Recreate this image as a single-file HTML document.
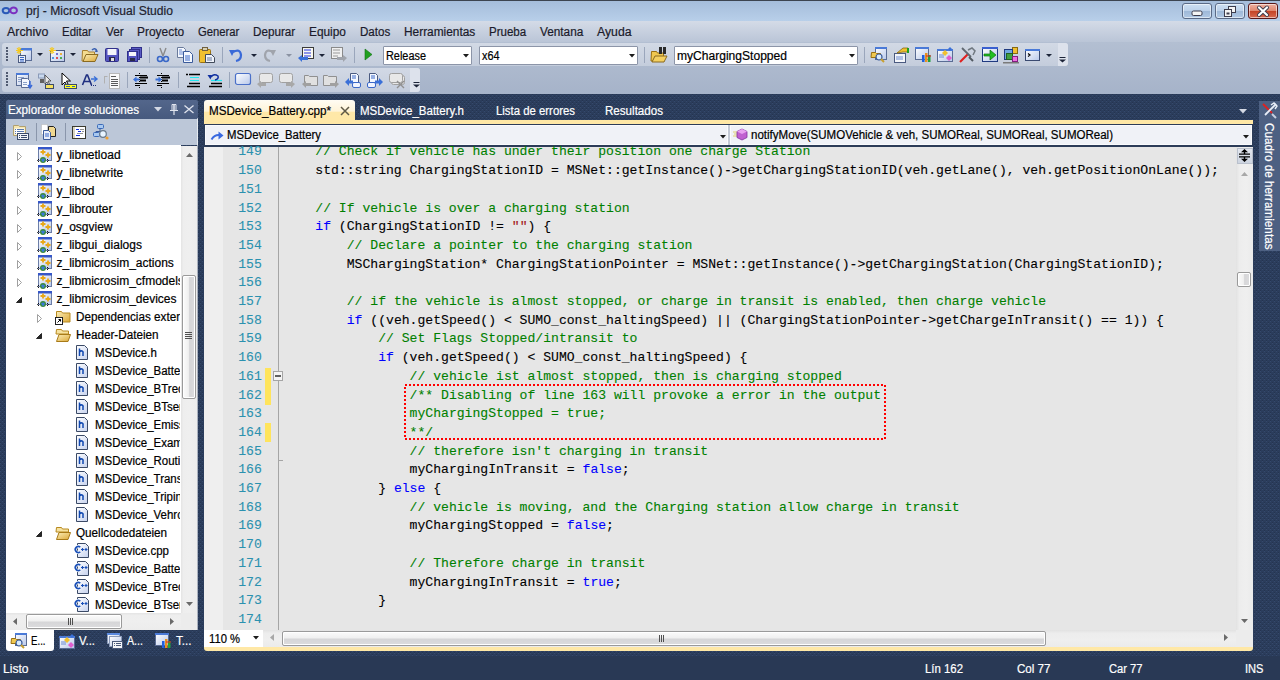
<!DOCTYPE html>
<html><head><meta charset="utf-8"><style>
html,body{margin:0;padding:0;width:1280px;height:680px;overflow:hidden;position:relative}
body{background:#2e4166;font-family:"Liberation Sans",sans-serif}
.t{position:absolute;white-space:pre;-webkit-text-stroke:0.2px currentColor}
.m{-webkit-text-stroke:0.1px currentColor}
svg{position:absolute;overflow:visible}
</style></head><body>
<svg style="left:0;top:93px" width="1280" height="564" shape-rendering="crispEdges"><defs><pattern id="bgp" width="4" height="4" patternUnits="userSpaceOnUse"><rect width="4" height="4" fill="#2b3d5c"/><rect x="2" y="0" width="1" height="1" fill="#36496c"/><rect x="0" y="2" width="1" height="1" fill="#36496c"/><rect x="0" y="1" width="1" height="1" fill="#253450"/><rect x="2" y="3" width="1" height="1" fill="#253450"/></pattern></defs><rect width="1280" height="564" fill="url(#bgp)"/></svg>
<div style="position:absolute;left:0px;top:656px;width:1280px;height:24px;background:#293955"></div>
<div style="position:absolute;left:0px;top:0px;width:1280px;height:21px;background:linear-gradient(#a4bcda,#b8cfe9)"></div>
<div style="position:absolute;left:0px;top:0px;width:1280px;height:1px;background:#3c4450"></div>
<div class="t" style="left:26px;top:4.84px;color:#1e1e2e;font-size:12px;line-height:12px;font-family:'Liberation Sans';font-weight:400;transform:scaleX(1.0079);transform-origin:0 0;">prj - Microsoft Visual Studio</div>
<div style="position:absolute;left:0px;top:21px;width:1280px;height:21px;background:linear-gradient(#d4dbe7,#bac5d7)"></div>
<div class="t" style="left:6.5px;top:25.84px;color:#1b1b2b;font-size:12px;line-height:12px;font-family:'Liberation Sans';font-weight:400;transform:scaleX(1.0321);transform-origin:0 0;">Archivo</div>
<div class="t" style="left:62.0px;top:25.84px;color:#1b1b2b;font-size:12px;line-height:12px;font-family:'Liberation Sans';font-weight:400;transform:scaleX(0.9535);transform-origin:0 0;">Editar</div>
<div class="t" style="left:105.5px;top:25.84px;color:#1b1b2b;font-size:12px;line-height:12px;font-family:'Liberation Sans';font-weight:400;transform:scaleX(0.9825);transform-origin:0 0;">Ver</div>
<div class="t" style="left:137.0px;top:25.84px;color:#1b1b2b;font-size:12px;line-height:12px;font-family:'Liberation Sans';font-weight:400;transform:scaleX(0.9945);transform-origin:0 0;">Proyecto</div>
<div class="t" style="left:198.2px;top:25.84px;color:#1b1b2b;font-size:12px;line-height:12px;font-family:'Liberation Sans';font-weight:400;transform:scaleX(0.9380);transform-origin:0 0;">Generar</div>
<div class="t" style="left:253.1px;top:25.84px;color:#1b1b2b;font-size:12px;line-height:12px;font-family:'Liberation Sans';font-weight:400;transform:scaleX(0.9733);transform-origin:0 0;">Depurar</div>
<div class="t" style="left:309.2px;top:25.84px;color:#1b1b2b;font-size:12px;line-height:12px;font-family:'Liberation Sans';font-weight:400;transform:scaleX(0.9873);transform-origin:0 0;">Equipo</div>
<div class="t" style="left:360.0px;top:25.84px;color:#1b1b2b;font-size:12px;line-height:12px;font-family:'Liberation Sans';font-weight:400;transform:scaleX(0.9662);transform-origin:0 0;">Datos</div>
<div class="t" style="left:404.0px;top:25.84px;color:#1b1b2b;font-size:12px;line-height:12px;font-family:'Liberation Sans';font-weight:400;transform:scaleX(0.9898);transform-origin:0 0;">Herramientas</div>
<div class="t" style="left:488.9px;top:25.84px;color:#1b1b2b;font-size:12px;line-height:12px;font-family:'Liberation Sans';font-weight:400;transform:scaleX(0.9612);transform-origin:0 0;">Prueba</div>
<div class="t" style="left:539.7px;top:25.84px;color:#1b1b2b;font-size:12px;line-height:12px;font-family:'Liberation Sans';font-weight:400;transform:scaleX(0.9830);transform-origin:0 0;">Ventana</div>
<div class="t" style="left:596.7px;top:25.84px;color:#1b1b2b;font-size:12px;line-height:12px;font-family:'Liberation Sans';font-weight:400;transform:scaleX(1.0203);transform-origin:0 0;">Ayuda</div>
<div style="position:absolute;left:0px;top:42px;width:1280px;height:52px;background:linear-gradient(#b3bfd2,#a6b3c9)"></div>
<div style="position:absolute;left:2px;top:43px;width:1066px;height:23px;background:linear-gradient(#d2d9e5,#c4cddc);border-radius:3px"></div>
<div style="position:absolute;left:2px;top:68px;width:418px;height:24px;background:linear-gradient(#d2d9e5,#c4cddc);border-radius:3px"></div>
<div class="t" style="left:3px;top:663.14px;color:#ffffff;font-size:12px;line-height:12px;font-family:'Liberation Sans';font-weight:400;transform:scaleX(1.0055);transform-origin:0 0;">Listo</div>
<div class="t" style="left:924.5px;top:663.14px;color:#ffffff;font-size:12px;line-height:12px;font-family:'Liberation Sans';font-weight:400;transform:scaleX(0.9489);transform-origin:0 0;">Lín 162</div>
<div class="t" style="left:1016.5px;top:663.14px;color:#ffffff;font-size:12px;line-height:12px;font-family:'Liberation Sans';font-weight:400;transform:scaleX(0.9658);transform-origin:0 0;">Col 77</div>
<div class="t" style="left:1108.5px;top:663.14px;color:#ffffff;font-size:12px;line-height:12px;font-family:'Liberation Sans';font-weight:400;transform:scaleX(0.9297);transform-origin:0 0;">Car 77</div>
<div class="t" style="left:1244.5px;top:663.14px;color:#ffffff;font-size:12px;line-height:12px;font-family:'Liberation Sans';font-weight:400;transform:scaleX(0.9243);transform-origin:0 0;">INS</div>
<div style="position:absolute;left:6px;top:118px;width:192px;height:27px;background:#bcc7d8"></div>
<div style="position:absolute;left:6px;top:145px;width:175px;height:468px;background:#ffffff"></div>
<div style="position:absolute;left:6px;top:630px;width:192px;height:21px;background:transparent"></div>
<div style="position:absolute;left:6px;top:630px;width:48px;height:21px;background:#ffffff;border-radius:0 0 3px 3px"></div>
<div class="t" style="left:31px;top:634.84px;color:#000;font-size:12px;line-height:12px;font-family:'Liberation Sans';font-weight:400;transform:scaleX(0.8049);transform-origin:0 0;">E...</div>
<div class="t" style="left:78.5px;top:634.84px;color:#fff;font-size:12px;line-height:12px;font-family:'Liberation Sans';font-weight:400;transform:scaleX(0.9464);transform-origin:0 0;">V...</div>
<div class="t" style="left:126.5px;top:634.84px;color:#fff;font-size:12px;line-height:12px;font-family:'Liberation Sans';font-weight:400;transform:scaleX(0.8881);transform-origin:0 0;">A...</div>
<div class="t" style="left:175.5px;top:634.84px;color:#fff;font-size:12px;line-height:12px;font-family:'Liberation Sans';font-weight:400;transform:scaleX(0.9678);transform-origin:0 0;">T...</div>
<div style="position:absolute;left:204px;top:100px;width:151px;height:24px;background:linear-gradient(#fffcf4,#fff4d8 46%,#ffe8a8 52%,#ffe8a6);border-radius:3px 3px 0 0"></div>
<div class="t" style="left:208.5px;top:104.84px;color:#000;font-size:12px;line-height:12px;font-family:'Liberation Sans';font-weight:400;transform:scaleX(0.9695);transform-origin:0 0;">MSDevice_Battery.cpp*</div>
<div class="t" style="left:360px;top:104.84px;color:#fff;font-size:12px;line-height:12px;font-family:'Liberation Sans';font-weight:400;transform:scaleX(0.9585);transform-origin:0 0;">MSDevice_Battery.h</div>
<div class="t" style="left:495.5px;top:104.84px;color:#fff;font-size:12px;line-height:12px;font-family:'Liberation Sans';font-weight:400;transform:scaleX(0.9475);transform-origin:0 0;">Lista de errores</div>
<div class="t" style="left:604.5px;top:104.84px;color:#fff;font-size:12px;line-height:12px;font-family:'Liberation Sans';font-weight:400;transform:scaleX(0.9659);transform-origin:0 0;">Resultados</div>
<div style="position:absolute;left:204px;top:120px;width:1049px;height:5px;background:#ffe8a6"></div>
<div style="position:absolute;left:204px;top:124px;width:1049px;height:23px;background:#2c3c58"></div>
<div style="position:absolute;left:205.2px;top:125.4px;width:522.8px;height:20px;background:#f0f2f7;box-sizing:border-box;border:1px solid #fafbfd"></div>
<div style="position:absolute;left:730px;top:125.4px;width:521.5px;height:20px;background:#f0f2f7;box-sizing:border-box;border:1px solid #fafbfd"></div>
<div class="t" style="left:227px;top:128.84px;color:#000;font-size:12px;line-height:12px;font-family:'Liberation Sans';font-weight:400;transform:scaleX(0.9459);transform-origin:0 0;">MSDevice_Battery</div>
<div class="t" style="left:751px;top:128.84px;color:#000;font-size:12px;line-height:12px;font-family:'Liberation Sans';font-weight:400;transform:scaleX(0.9608);transform-origin:0 0;">notifyMove(SUMOVehicle &amp; veh, SUMOReal, SUMOReal, SUMOReal)</div>
<div style="position:absolute;left:204px;top:147px;width:1049px;height:483px;background:#e6e6e6"></div>
<div style="position:absolute;left:204px;top:147px;width:19px;height:483px;background:#efefef"></div>
<div style="position:absolute;left:204px;top:630px;width:1049px;height:17px;background:#efefef"></div>
<div style="position:absolute;left:204px;top:630px;width:59px;height:17px;background:#ffffff"></div>
<div class="t" style="left:208.5px;top:632.84px;color:#000;font-size:12px;line-height:12px;font-family:'Liberation Sans';font-weight:400;transform:scaleX(0.9354);transform-origin:0 0;">110 %</div>
<div style="position:absolute;left:204px;top:647px;width:1049px;height:4px;background:#ffe8a6;border-radius:0 0 3px 3px"></div>
<div style="position:absolute;left:1259px;top:101px;width:21px;height:150px;background:#4d6082"></div>
<div class="t m" style="left:238.22px;top:145.46px;color:#2b91af;font-size:13.1px;line-height:13.1px;font-family:'Liberation Mono';font-weight:400;">149</div>
<div class="t m" style="left:315.3px;top:145.46px;color:#008000;font-size:13.1px;line-height:13.1px;font-family:'Liberation Mono';font-weight:400;">// Check if vehicle has under their position one charge Station</div>
<div class="t m" style="left:238.22px;top:164.16px;color:#2b91af;font-size:13.1px;line-height:13.1px;font-family:'Liberation Mono';font-weight:400;">150</div>
<div class="t m" style="left:315.3px;top:164.16px;color:#000000;font-size:13.1px;line-height:13.1px;font-family:'Liberation Mono';font-weight:400;">std::string ChargingStationID = MSNet::getInstance()-&gt;getChargingStationID(veh.getLane(), veh.getPositionOnLane());</div>
<div class="t m" style="left:238.22px;top:182.86px;color:#2b91af;font-size:13.1px;line-height:13.1px;font-family:'Liberation Mono';font-weight:400;">151</div>
<div class="t m" style="left:238.22px;top:201.56px;color:#2b91af;font-size:13.1px;line-height:13.1px;font-family:'Liberation Mono';font-weight:400;">152</div>
<div class="t m" style="left:315.3px;top:201.56px;color:#008000;font-size:13.1px;line-height:13.1px;font-family:'Liberation Mono';font-weight:400;">// If vehicle is over a charging station</div>
<div class="t m" style="left:238.22px;top:220.26px;color:#2b91af;font-size:13.1px;line-height:13.1px;font-family:'Liberation Mono';font-weight:400;">153</div>
<div class="t m" style="left:315.3px;top:220.26px;color:#0000ff;font-size:13.1px;line-height:13.1px;font-family:'Liberation Mono';font-weight:400;">if</div>
<div class="t m" style="left:331.02000000000004px;top:220.26px;color:#000000;font-size:13.1px;line-height:13.1px;font-family:'Liberation Mono';font-weight:400;"> (ChargingStationID != </div>
<div class="t m" style="left:511.8px;top:220.26px;color:#a31515;font-size:13.1px;line-height:13.1px;font-family:'Liberation Mono';font-weight:400;">""</div>
<div class="t m" style="left:527.52px;top:220.26px;color:#000000;font-size:13.1px;line-height:13.1px;font-family:'Liberation Mono';font-weight:400;">) {</div>
<div class="t m" style="left:238.22px;top:238.96px;color:#2b91af;font-size:13.1px;line-height:13.1px;font-family:'Liberation Mono';font-weight:400;">154</div>
<div class="t m" style="left:346.74px;top:238.96px;color:#008000;font-size:13.1px;line-height:13.1px;font-family:'Liberation Mono';font-weight:400;">// Declare a pointer to the charging station</div>
<div class="t m" style="left:238.22px;top:257.66px;color:#2b91af;font-size:13.1px;line-height:13.1px;font-family:'Liberation Mono';font-weight:400;">155</div>
<div class="t m" style="left:346.74px;top:257.66px;color:#000000;font-size:13.1px;line-height:13.1px;font-family:'Liberation Mono';font-weight:400;">MSChargingStation* ChargingStationPointer = MSNet::getInstance()-&gt;getChargingStation(ChargingStationID);</div>
<div class="t m" style="left:238.22px;top:276.36px;color:#2b91af;font-size:13.1px;line-height:13.1px;font-family:'Liberation Mono';font-weight:400;">156</div>
<div class="t m" style="left:238.22px;top:295.06px;color:#2b91af;font-size:13.1px;line-height:13.1px;font-family:'Liberation Mono';font-weight:400;">157</div>
<div class="t m" style="left:346.74px;top:295.06px;color:#008000;font-size:13.1px;line-height:13.1px;font-family:'Liberation Mono';font-weight:400;">// if the vehicle is almost stopped, or charge in transit is enabled, then charge vehicle</div>
<div class="t m" style="left:238.22px;top:313.76px;color:#2b91af;font-size:13.1px;line-height:13.1px;font-family:'Liberation Mono';font-weight:400;">158</div>
<div class="t m" style="left:346.74px;top:313.76px;color:#0000ff;font-size:13.1px;line-height:13.1px;font-family:'Liberation Mono';font-weight:400;">if</div>
<div class="t m" style="left:362.46000000000004px;top:313.76px;color:#000000;font-size:13.1px;line-height:13.1px;font-family:'Liberation Mono';font-weight:400;"> ((veh.getSpeed() &lt; SUMO_const_haltingSpeed) || (ChargingStationPointer-&gt;getChargeInTransit() == 1)) {</div>
<div class="t m" style="left:238.22px;top:332.46px;color:#2b91af;font-size:13.1px;line-height:13.1px;font-family:'Liberation Mono';font-weight:400;">159</div>
<div class="t m" style="left:378.18px;top:332.46px;color:#008000;font-size:13.1px;line-height:13.1px;font-family:'Liberation Mono';font-weight:400;">// Set Flags Stopped/intransit to</div>
<div class="t m" style="left:238.22px;top:351.16px;color:#2b91af;font-size:13.1px;line-height:13.1px;font-family:'Liberation Mono';font-weight:400;">160</div>
<div class="t m" style="left:378.18px;top:351.16px;color:#0000ff;font-size:13.1px;line-height:13.1px;font-family:'Liberation Mono';font-weight:400;">if</div>
<div class="t m" style="left:393.90000000000003px;top:351.16px;color:#000000;font-size:13.1px;line-height:13.1px;font-family:'Liberation Mono';font-weight:400;"> (veh.getSpeed() &lt; SUMO_const_haltingSpeed) {</div>
<div class="t m" style="left:238.22px;top:369.86px;color:#2b91af;font-size:13.1px;line-height:13.1px;font-family:'Liberation Mono';font-weight:400;">161</div>
<div class="t m" style="left:409.62px;top:369.86px;color:#008000;font-size:13.1px;line-height:13.1px;font-family:'Liberation Mono';font-weight:400;">// vehicle ist almost stopped, then is charging stopped</div>
<div class="t m" style="left:238.22px;top:388.56px;color:#2b91af;font-size:13.1px;line-height:13.1px;font-family:'Liberation Mono';font-weight:400;">162</div>
<div class="t m" style="left:409.62px;top:388.56px;color:#008000;font-size:13.1px;line-height:13.1px;font-family:'Liberation Mono';font-weight:400;">/** Disabling of line 163 will provoke a error in the output</div>
<div class="t m" style="left:238.22px;top:407.26px;color:#2b91af;font-size:13.1px;line-height:13.1px;font-family:'Liberation Mono';font-weight:400;">163</div>
<div class="t m" style="left:409.62px;top:407.26px;color:#008000;font-size:13.1px;line-height:13.1px;font-family:'Liberation Mono';font-weight:400;">myChargingStopped = true;</div>
<div class="t m" style="left:238.22px;top:425.96px;color:#2b91af;font-size:13.1px;line-height:13.1px;font-family:'Liberation Mono';font-weight:400;">164</div>
<div class="t m" style="left:409.62px;top:425.96px;color:#008000;font-size:13.1px;line-height:13.1px;font-family:'Liberation Mono';font-weight:400;">**/</div>
<div class="t m" style="left:238.22px;top:444.66px;color:#2b91af;font-size:13.1px;line-height:13.1px;font-family:'Liberation Mono';font-weight:400;">165</div>
<div class="t m" style="left:409.62px;top:444.66px;color:#008000;font-size:13.1px;line-height:13.1px;font-family:'Liberation Mono';font-weight:400;">// therefore isn't charging in transit</div>
<div class="t m" style="left:238.22px;top:463.36px;color:#2b91af;font-size:13.1px;line-height:13.1px;font-family:'Liberation Mono';font-weight:400;">166</div>
<div class="t m" style="left:409.62px;top:463.36px;color:#000000;font-size:13.1px;line-height:13.1px;font-family:'Liberation Mono';font-weight:400;">myChargingInTransit = </div>
<div class="t m" style="left:582.54px;top:463.36px;color:#0000ff;font-size:13.1px;line-height:13.1px;font-family:'Liberation Mono';font-weight:400;">false</div>
<div class="t m" style="left:621.84px;top:463.36px;color:#000000;font-size:13.1px;line-height:13.1px;font-family:'Liberation Mono';font-weight:400;">;</div>
<div class="t m" style="left:238.22px;top:482.06px;color:#2b91af;font-size:13.1px;line-height:13.1px;font-family:'Liberation Mono';font-weight:400;">167</div>
<div class="t m" style="left:378.18px;top:482.06px;color:#000000;font-size:13.1px;line-height:13.1px;font-family:'Liberation Mono';font-weight:400;">} </div>
<div class="t m" style="left:393.90000000000003px;top:482.06px;color:#0000ff;font-size:13.1px;line-height:13.1px;font-family:'Liberation Mono';font-weight:400;">else</div>
<div class="t m" style="left:425.34000000000003px;top:482.06px;color:#000000;font-size:13.1px;line-height:13.1px;font-family:'Liberation Mono';font-weight:400;"> {</div>
<div class="t m" style="left:238.22px;top:500.76px;color:#2b91af;font-size:13.1px;line-height:13.1px;font-family:'Liberation Mono';font-weight:400;">168</div>
<div class="t m" style="left:409.62px;top:500.76px;color:#008000;font-size:13.1px;line-height:13.1px;font-family:'Liberation Mono';font-weight:400;">// vehicle is moving, and the Charging station allow charge in transit</div>
<div class="t m" style="left:238.22px;top:519.46px;color:#2b91af;font-size:13.1px;line-height:13.1px;font-family:'Liberation Mono';font-weight:400;">169</div>
<div class="t m" style="left:409.62px;top:519.46px;color:#000000;font-size:13.1px;line-height:13.1px;font-family:'Liberation Mono';font-weight:400;">myChargingStopped = </div>
<div class="t m" style="left:566.82px;top:519.46px;color:#0000ff;font-size:13.1px;line-height:13.1px;font-family:'Liberation Mono';font-weight:400;">false</div>
<div class="t m" style="left:606.12px;top:519.46px;color:#000000;font-size:13.1px;line-height:13.1px;font-family:'Liberation Mono';font-weight:400;">;</div>
<div class="t m" style="left:238.22px;top:538.16px;color:#2b91af;font-size:13.1px;line-height:13.1px;font-family:'Liberation Mono';font-weight:400;">170</div>
<div class="t m" style="left:238.22px;top:556.86px;color:#2b91af;font-size:13.1px;line-height:13.1px;font-family:'Liberation Mono';font-weight:400;">171</div>
<div class="t m" style="left:409.62px;top:556.86px;color:#008000;font-size:13.1px;line-height:13.1px;font-family:'Liberation Mono';font-weight:400;">// Therefore charge in transit</div>
<div class="t m" style="left:238.22px;top:575.56px;color:#2b91af;font-size:13.1px;line-height:13.1px;font-family:'Liberation Mono';font-weight:400;">172</div>
<div class="t m" style="left:409.62px;top:575.56px;color:#000000;font-size:13.1px;line-height:13.1px;font-family:'Liberation Mono';font-weight:400;">myChargingInTransit = </div>
<div class="t m" style="left:582.54px;top:575.56px;color:#0000ff;font-size:13.1px;line-height:13.1px;font-family:'Liberation Mono';font-weight:400;">true</div>
<div class="t m" style="left:613.98px;top:575.56px;color:#000000;font-size:13.1px;line-height:13.1px;font-family:'Liberation Mono';font-weight:400;">;</div>
<div class="t m" style="left:238.22px;top:594.26px;color:#2b91af;font-size:13.1px;line-height:13.1px;font-family:'Liberation Mono';font-weight:400;">173</div>
<div class="t m" style="left:378.18px;top:594.26px;color:#000000;font-size:13.1px;line-height:13.1px;font-family:'Liberation Mono';font-weight:400;">}</div>
<div class="t m" style="left:238.22px;top:612.96px;color:#2b91af;font-size:13.1px;line-height:13.1px;font-family:'Liberation Mono';font-weight:400;">174</div>
<div style="position:absolute;left:6px;top:145px;width:174px;height:468px;overflow:hidden">
<div class="t" style="left:50.5px;top:3.64px;color:#000;font-size:12px;line-height:12px;font-family:'Liberation Sans';font-weight:400;transform:scaleX(1.0);transform-origin:0 0;">y_libnetload</div>
<div class="t" style="left:50.5px;top:21.64px;color:#000;font-size:12px;line-height:12px;font-family:'Liberation Sans';font-weight:400;transform:scaleX(1.0);transform-origin:0 0;">y_libnetwrite</div>
<div class="t" style="left:50.5px;top:39.64px;color:#000;font-size:12px;line-height:12px;font-family:'Liberation Sans';font-weight:400;transform:scaleX(1.0);transform-origin:0 0;">y_libod</div>
<div class="t" style="left:50.5px;top:57.64px;color:#000;font-size:12px;line-height:12px;font-family:'Liberation Sans';font-weight:400;transform:scaleX(1.0);transform-origin:0 0;">y_librouter</div>
<div class="t" style="left:50.5px;top:75.64px;color:#000;font-size:12px;line-height:12px;font-family:'Liberation Sans';font-weight:400;transform:scaleX(1.0);transform-origin:0 0;">y_osgview</div>
<div class="t" style="left:50.5px;top:93.64px;color:#000;font-size:12px;line-height:12px;font-family:'Liberation Sans';font-weight:400;transform:scaleX(1.0);transform-origin:0 0;">z_libgui_dialogs</div>
<div class="t" style="left:50.5px;top:111.64px;color:#000;font-size:12px;line-height:12px;font-family:'Liberation Sans';font-weight:400;transform:scaleX(1.0);transform-origin:0 0;">z_libmicrosim_actions</div>
<div class="t" style="left:50.5px;top:129.64px;color:#000;font-size:12px;line-height:12px;font-family:'Liberation Sans';font-weight:400;transform:scaleX(1.0);transform-origin:0 0;">z_libmicrosim_cfmodels</div>
<div class="t" style="left:50.5px;top:147.64px;color:#000;font-size:12px;line-height:12px;font-family:'Liberation Sans';font-weight:400;transform:scaleX(1.0);transform-origin:0 0;">z_libmicrosim_devices</div>
<div class="t" style="left:70px;top:165.64px;color:#000;font-size:12px;line-height:12px;font-family:'Liberation Sans';font-weight:400;transform:scaleX(0.975);transform-origin:0 0;">Dependencias externas</div>
<div class="t" style="left:70px;top:183.64px;color:#000;font-size:12px;line-height:12px;font-family:'Liberation Sans';font-weight:400;transform:scaleX(0.975);transform-origin:0 0;">Header-Dateien</div>
<div class="t" style="left:89px;top:201.64px;color:#000;font-size:12px;line-height:12px;font-family:'Liberation Sans';font-weight:400;transform:scaleX(0.955);transform-origin:0 0;">MSDevice.h</div>
<div class="t" style="left:89px;top:219.64px;color:#000;font-size:12px;line-height:12px;font-family:'Liberation Sans';font-weight:400;transform:scaleX(0.955);transform-origin:0 0;">MSDevice_Battery.h</div>
<div class="t" style="left:89px;top:237.64px;color:#000;font-size:12px;line-height:12px;font-family:'Liberation Sans';font-weight:400;transform:scaleX(0.955);transform-origin:0 0;">MSDevice_BTreceiver.h</div>
<div class="t" style="left:89px;top:255.64px;color:#000;font-size:12px;line-height:12px;font-family:'Liberation Sans';font-weight:400;transform:scaleX(0.955);transform-origin:0 0;">MSDevice_BTsender.h</div>
<div class="t" style="left:89px;top:273.64px;color:#000;font-size:12px;line-height:12px;font-family:'Liberation Sans';font-weight:400;transform:scaleX(0.955);transform-origin:0 0;">MSDevice_Emissions.h</div>
<div class="t" style="left:89px;top:291.64px;color:#000;font-size:12px;line-height:12px;font-family:'Liberation Sans';font-weight:400;transform:scaleX(0.955);transform-origin:0 0;">MSDevice_Example.h</div>
<div class="t" style="left:89px;top:309.64px;color:#000;font-size:12px;line-height:12px;font-family:'Liberation Sans';font-weight:400;transform:scaleX(0.955);transform-origin:0 0;">MSDevice_Routing.h</div>
<div class="t" style="left:89px;top:327.64px;color:#000;font-size:12px;line-height:12px;font-family:'Liberation Sans';font-weight:400;transform:scaleX(0.955);transform-origin:0 0;">MSDevice_Transportable.h</div>
<div class="t" style="left:89px;top:345.64px;color:#000;font-size:12px;line-height:12px;font-family:'Liberation Sans';font-weight:400;transform:scaleX(0.955);transform-origin:0 0;">MSDevice_Tripinfo.h</div>
<div class="t" style="left:89px;top:363.64px;color:#000;font-size:12px;line-height:12px;font-family:'Liberation Sans';font-weight:400;transform:scaleX(0.955);transform-origin:0 0;">MSDevice_Vehroutes.h</div>
<div class="t" style="left:70px;top:381.64px;color:#000;font-size:12px;line-height:12px;font-family:'Liberation Sans';font-weight:400;transform:scaleX(0.975);transform-origin:0 0;">Quellcodedateien</div>
<div class="t" style="left:89px;top:399.64px;color:#000;font-size:12px;line-height:12px;font-family:'Liberation Sans';font-weight:400;transform:scaleX(0.955);transform-origin:0 0;">MSDevice.cpp</div>
<div class="t" style="left:89px;top:417.64px;color:#000;font-size:12px;line-height:12px;font-family:'Liberation Sans';font-weight:400;transform:scaleX(0.955);transform-origin:0 0;">MSDevice_Battery.cpp</div>
<div class="t" style="left:89px;top:435.64px;color:#000;font-size:12px;line-height:12px;font-family:'Liberation Sans';font-weight:400;transform:scaleX(0.955);transform-origin:0 0;">MSDevice_BTreceiver.cpp</div>
<div class="t" style="left:89px;top:453.64px;color:#000;font-size:12px;line-height:12px;font-family:'Liberation Sans';font-weight:400;transform:scaleX(0.955);transform-origin:0 0;">MSDevice_BTsender.cpp</div>
</div>
<svg width="0" height="0" style="position:absolute"><defs><linearGradient id="gw" x1="0" y1="0" x2="1" y2="1"><stop offset="0" stop-color="#ffffff"/><stop offset="1" stop-color="#b8c8ea"/></linearGradient><linearGradient id="gf" x1="0" y1="0" x2="1" y2="1"><stop offset="0" stop-color="#fbeeb8"/><stop offset="1" stop-color="#dca838"/></linearGradient><linearGradient id="gp" x1="0" y1="0" x2="1" y2="1"><stop offset="0" stop-color="#ffffff"/><stop offset="1" stop-color="#c6d2ee"/></linearGradient></defs></svg>
<svg style="left:16px;top:152px;" width="8" height="10" viewBox="0 0 8 10"><path d="M1.5 0.5l4 4l-4 4z" fill="#fff" stroke="#a0a0a0"/></svg>
<svg style="left:37px;top:147px;" width="16" height="16" viewBox="0 0 16 16"><rect x="1.5" y="0.5" width="13" height="13" fill="url(#gw)" stroke="#6c7ea8"/><rect x="1" y="0" width="14" height="2.5" fill="#3556c8"/><path d="M6 2.5v5M3.5 5h5M11 5.5v5M8.5 8h5" stroke="#e8a818" stroke-width="1.8"/><circle cx="6" cy="13" r="3" fill="#3a8a3a"/><path d="M4 12.5q2-2 4 0q-1 2-2 3" fill="#3a7ad8"/><path d="M2 12l-1.5 1.5l1.5 1.5M10 12l1.5 1.5l-1.5 1.5" stroke="#000" fill="none" stroke-width="0.9"/></svg>
<svg style="left:16px;top:170px;" width="8" height="10" viewBox="0 0 8 10"><path d="M1.5 0.5l4 4l-4 4z" fill="#fff" stroke="#a0a0a0"/></svg>
<svg style="left:37px;top:165px;" width="16" height="16" viewBox="0 0 16 16"><rect x="1.5" y="0.5" width="13" height="13" fill="url(#gw)" stroke="#6c7ea8"/><rect x="1" y="0" width="14" height="2.5" fill="#3556c8"/><path d="M6 2.5v5M3.5 5h5M11 5.5v5M8.5 8h5" stroke="#e8a818" stroke-width="1.8"/><circle cx="6" cy="13" r="3" fill="#3a8a3a"/><path d="M4 12.5q2-2 4 0q-1 2-2 3" fill="#3a7ad8"/><path d="M2 12l-1.5 1.5l1.5 1.5M10 12l1.5 1.5l-1.5 1.5" stroke="#000" fill="none" stroke-width="0.9"/></svg>
<svg style="left:16px;top:188px;" width="8" height="10" viewBox="0 0 8 10"><path d="M1.5 0.5l4 4l-4 4z" fill="#fff" stroke="#a0a0a0"/></svg>
<svg style="left:37px;top:183px;" width="16" height="16" viewBox="0 0 16 16"><rect x="1.5" y="0.5" width="13" height="13" fill="url(#gw)" stroke="#6c7ea8"/><rect x="1" y="0" width="14" height="2.5" fill="#3556c8"/><path d="M6 2.5v5M3.5 5h5M11 5.5v5M8.5 8h5" stroke="#e8a818" stroke-width="1.8"/><circle cx="6" cy="13" r="3" fill="#3a8a3a"/><path d="M4 12.5q2-2 4 0q-1 2-2 3" fill="#3a7ad8"/><path d="M2 12l-1.5 1.5l1.5 1.5M10 12l1.5 1.5l-1.5 1.5" stroke="#000" fill="none" stroke-width="0.9"/></svg>
<svg style="left:16px;top:206px;" width="8" height="10" viewBox="0 0 8 10"><path d="M1.5 0.5l4 4l-4 4z" fill="#fff" stroke="#a0a0a0"/></svg>
<svg style="left:37px;top:201px;" width="16" height="16" viewBox="0 0 16 16"><rect x="1.5" y="0.5" width="13" height="13" fill="url(#gw)" stroke="#6c7ea8"/><rect x="1" y="0" width="14" height="2.5" fill="#3556c8"/><path d="M6 2.5v5M3.5 5h5M11 5.5v5M8.5 8h5" stroke="#e8a818" stroke-width="1.8"/><circle cx="6" cy="13" r="3" fill="#3a8a3a"/><path d="M4 12.5q2-2 4 0q-1 2-2 3" fill="#3a7ad8"/><path d="M2 12l-1.5 1.5l1.5 1.5M10 12l1.5 1.5l-1.5 1.5" stroke="#000" fill="none" stroke-width="0.9"/></svg>
<svg style="left:16px;top:224px;" width="8" height="10" viewBox="0 0 8 10"><path d="M1.5 0.5l4 4l-4 4z" fill="#fff" stroke="#a0a0a0"/></svg>
<svg style="left:37px;top:219px;" width="16" height="16" viewBox="0 0 16 16"><rect x="1.5" y="0.5" width="13" height="13" fill="url(#gw)" stroke="#6c7ea8"/><rect x="1" y="0" width="14" height="2.5" fill="#3556c8"/><path d="M6 2.5v5M3.5 5h5M11 5.5v5M8.5 8h5" stroke="#e8a818" stroke-width="1.8"/><circle cx="6" cy="13" r="3" fill="#3a8a3a"/><path d="M4 12.5q2-2 4 0q-1 2-2 3" fill="#3a7ad8"/><path d="M2 12l-1.5 1.5l1.5 1.5M10 12l1.5 1.5l-1.5 1.5" stroke="#000" fill="none" stroke-width="0.9"/></svg>
<svg style="left:16px;top:242px;" width="8" height="10" viewBox="0 0 8 10"><path d="M1.5 0.5l4 4l-4 4z" fill="#fff" stroke="#a0a0a0"/></svg>
<svg style="left:37px;top:237px;" width="16" height="16" viewBox="0 0 16 16"><rect x="1.5" y="0.5" width="13" height="13" fill="url(#gw)" stroke="#6c7ea8"/><rect x="1" y="0" width="14" height="2.5" fill="#3556c8"/><path d="M6 2.5v5M3.5 5h5M11 5.5v5M8.5 8h5" stroke="#e8a818" stroke-width="1.8"/><circle cx="6" cy="13" r="3" fill="#3a8a3a"/><path d="M4 12.5q2-2 4 0q-1 2-2 3" fill="#3a7ad8"/><path d="M2 12l-1.5 1.5l1.5 1.5M10 12l1.5 1.5l-1.5 1.5" stroke="#000" fill="none" stroke-width="0.9"/></svg>
<svg style="left:16px;top:260px;" width="8" height="10" viewBox="0 0 8 10"><path d="M1.5 0.5l4 4l-4 4z" fill="#fff" stroke="#a0a0a0"/></svg>
<svg style="left:37px;top:255px;" width="16" height="16" viewBox="0 0 16 16"><rect x="1.5" y="0.5" width="13" height="13" fill="url(#gw)" stroke="#6c7ea8"/><rect x="1" y="0" width="14" height="2.5" fill="#3556c8"/><path d="M6 2.5v5M3.5 5h5M11 5.5v5M8.5 8h5" stroke="#e8a818" stroke-width="1.8"/><circle cx="6" cy="13" r="3" fill="#3a8a3a"/><path d="M4 12.5q2-2 4 0q-1 2-2 3" fill="#3a7ad8"/><path d="M2 12l-1.5 1.5l1.5 1.5M10 12l1.5 1.5l-1.5 1.5" stroke="#000" fill="none" stroke-width="0.9"/></svg>
<svg style="left:16px;top:278px;" width="8" height="10" viewBox="0 0 8 10"><path d="M1.5 0.5l4 4l-4 4z" fill="#fff" stroke="#a0a0a0"/></svg>
<svg style="left:37px;top:273px;" width="16" height="16" viewBox="0 0 16 16"><rect x="1.5" y="0.5" width="13" height="13" fill="url(#gw)" stroke="#6c7ea8"/><rect x="1" y="0" width="14" height="2.5" fill="#3556c8"/><path d="M6 2.5v5M3.5 5h5M11 5.5v5M8.5 8h5" stroke="#e8a818" stroke-width="1.8"/><circle cx="6" cy="13" r="3" fill="#3a8a3a"/><path d="M4 12.5q2-2 4 0q-1 2-2 3" fill="#3a7ad8"/><path d="M2 12l-1.5 1.5l1.5 1.5M10 12l1.5 1.5l-1.5 1.5" stroke="#000" fill="none" stroke-width="0.9"/></svg>
<svg style="left:16px;top:297px;" width="8" height="8" viewBox="0 0 8 8"><path d="M5.5 0.5v5h-5z" fill="#262626" stroke="#262626"/></svg>
<svg style="left:37px;top:291px;" width="16" height="16" viewBox="0 0 16 16"><rect x="1.5" y="0.5" width="13" height="13" fill="url(#gw)" stroke="#6c7ea8"/><rect x="1" y="0" width="14" height="2.5" fill="#3556c8"/><path d="M6 2.5v5M3.5 5h5M11 5.5v5M8.5 8h5" stroke="#e8a818" stroke-width="1.8"/><circle cx="6" cy="13" r="3" fill="#3a8a3a"/><path d="M4 12.5q2-2 4 0q-1 2-2 3" fill="#3a7ad8"/><path d="M2 12l-1.5 1.5l1.5 1.5M10 12l1.5 1.5l-1.5 1.5" stroke="#000" fill="none" stroke-width="0.9"/></svg>
<svg style="left:36px;top:314px;" width="8" height="10" viewBox="0 0 8 10"><path d="M1.5 0.5l4 4l-4 4z" fill="#fff" stroke="#a0a0a0"/></svg>
<svg style="left:55px;top:309px;" width="16" height="16" viewBox="0 0 16 16"><path d="M1.5 2.5h5l1 1.5h7.5v9h-13.5z" fill="url(#gf)" stroke="#b88a20"/><rect x="0.5" y="8.5" width="7" height="7" fill="#fff" stroke="#222"/><path d="M2.5 13.5l3-3M3.5 10.5h2v2" stroke="#000" fill="none"/></svg>
<svg style="left:36px;top:333px;" width="8" height="8" viewBox="0 0 8 8"><path d="M5.5 0.5v5h-5z" fill="#262626" stroke="#262626"/></svg>
<svg style="left:55px;top:328px;" width="16" height="16" viewBox="0 0 16 16"><path d="M1.5 1.5h5l1 1.5h6v3h-12.5z" fill="#f6e2a0" stroke="#b88a20"/><path d="M1.5 13.5l2.5-7h11.5l-2.5 7z" fill="url(#gf)" stroke="#a87a18"/></svg>
<svg style="left:76px;top:345px;" width="13" height="16" viewBox="0 0 13 16"><path d="M0.5 0.5h8l3 3v11h-11z" fill="url(#gp)" stroke="#3b4a66"/><path d="M3.5 3.5v7.5M3.5 7q1-1.5 2.5-1t1 2v3" stroke="#1048b0" stroke-width="1.5" fill="none"/></svg>
<svg style="left:76px;top:363px;" width="13" height="16" viewBox="0 0 13 16"><path d="M0.5 0.5h8l3 3v11h-11z" fill="url(#gp)" stroke="#3b4a66"/><path d="M3.5 3.5v7.5M3.5 7q1-1.5 2.5-1t1 2v3" stroke="#1048b0" stroke-width="1.5" fill="none"/></svg>
<svg style="left:76px;top:381px;" width="13" height="16" viewBox="0 0 13 16"><path d="M0.5 0.5h8l3 3v11h-11z" fill="url(#gp)" stroke="#3b4a66"/><path d="M3.5 3.5v7.5M3.5 7q1-1.5 2.5-1t1 2v3" stroke="#1048b0" stroke-width="1.5" fill="none"/></svg>
<svg style="left:76px;top:399px;" width="13" height="16" viewBox="0 0 13 16"><path d="M0.5 0.5h8l3 3v11h-11z" fill="url(#gp)" stroke="#3b4a66"/><path d="M3.5 3.5v7.5M3.5 7q1-1.5 2.5-1t1 2v3" stroke="#1048b0" stroke-width="1.5" fill="none"/></svg>
<svg style="left:76px;top:417px;" width="13" height="16" viewBox="0 0 13 16"><path d="M0.5 0.5h8l3 3v11h-11z" fill="url(#gp)" stroke="#3b4a66"/><path d="M3.5 3.5v7.5M3.5 7q1-1.5 2.5-1t1 2v3" stroke="#1048b0" stroke-width="1.5" fill="none"/></svg>
<svg style="left:76px;top:435px;" width="13" height="16" viewBox="0 0 13 16"><path d="M0.5 0.5h8l3 3v11h-11z" fill="url(#gp)" stroke="#3b4a66"/><path d="M3.5 3.5v7.5M3.5 7q1-1.5 2.5-1t1 2v3" stroke="#1048b0" stroke-width="1.5" fill="none"/></svg>
<svg style="left:76px;top:453px;" width="13" height="16" viewBox="0 0 13 16"><path d="M0.5 0.5h8l3 3v11h-11z" fill="url(#gp)" stroke="#3b4a66"/><path d="M3.5 3.5v7.5M3.5 7q1-1.5 2.5-1t1 2v3" stroke="#1048b0" stroke-width="1.5" fill="none"/></svg>
<svg style="left:76px;top:471px;" width="13" height="16" viewBox="0 0 13 16"><path d="M0.5 0.5h8l3 3v11h-11z" fill="url(#gp)" stroke="#3b4a66"/><path d="M3.5 3.5v7.5M3.5 7q1-1.5 2.5-1t1 2v3" stroke="#1048b0" stroke-width="1.5" fill="none"/></svg>
<svg style="left:76px;top:489px;" width="13" height="16" viewBox="0 0 13 16"><path d="M0.5 0.5h8l3 3v11h-11z" fill="url(#gp)" stroke="#3b4a66"/><path d="M3.5 3.5v7.5M3.5 7q1-1.5 2.5-1t1 2v3" stroke="#1048b0" stroke-width="1.5" fill="none"/></svg>
<svg style="left:76px;top:507px;" width="13" height="16" viewBox="0 0 13 16"><path d="M0.5 0.5h8l3 3v11h-11z" fill="url(#gp)" stroke="#3b4a66"/><path d="M3.5 3.5v7.5M3.5 7q1-1.5 2.5-1t1 2v3" stroke="#1048b0" stroke-width="1.5" fill="none"/></svg>
<svg style="left:36px;top:531px;" width="8" height="8" viewBox="0 0 8 8"><path d="M5.5 0.5v5h-5z" fill="#262626" stroke="#262626"/></svg>
<svg style="left:55px;top:526px;" width="16" height="16" viewBox="0 0 16 16"><path d="M1.5 1.5h5l1 1.5h6v3h-12.5z" fill="#f6e2a0" stroke="#b88a20"/><path d="M1.5 13.5l2.5-7h11.5l-2.5 7z" fill="url(#gf)" stroke="#a87a18"/></svg>
<svg style="left:74px;top:543px;" width="15" height="16" viewBox="0 0 15 16"><path d="M3.5 0.5h8l3 3v11h-11z" fill="url(#gp)" stroke="#3b4a66"/><path d="M6.3 4.2a3 3 0 1 0 0 4.6" stroke="#fff" stroke-width="3" fill="none"/><path d="M6.3 4.2a3 3 0 1 0 0 4.6" stroke="#1a50b8" stroke-width="1.7" fill="none"/><path d="M7 6.5h3M8.5 5v3M10.5 6.5h3M12 5v3" stroke="#1a50b8" stroke-width="1.1"/></svg>
<svg style="left:74px;top:561px;" width="15" height="16" viewBox="0 0 15 16"><path d="M3.5 0.5h8l3 3v11h-11z" fill="url(#gp)" stroke="#3b4a66"/><path d="M6.3 4.2a3 3 0 1 0 0 4.6" stroke="#fff" stroke-width="3" fill="none"/><path d="M6.3 4.2a3 3 0 1 0 0 4.6" stroke="#1a50b8" stroke-width="1.7" fill="none"/><path d="M7 6.5h3M8.5 5v3M10.5 6.5h3M12 5v3" stroke="#1a50b8" stroke-width="1.1"/></svg>
<svg style="left:74px;top:579px;" width="15" height="16" viewBox="0 0 15 16"><path d="M3.5 0.5h8l3 3v11h-11z" fill="url(#gp)" stroke="#3b4a66"/><path d="M6.3 4.2a3 3 0 1 0 0 4.6" stroke="#fff" stroke-width="3" fill="none"/><path d="M6.3 4.2a3 3 0 1 0 0 4.6" stroke="#1a50b8" stroke-width="1.7" fill="none"/><path d="M7 6.5h3M8.5 5v3M10.5 6.5h3M12 5v3" stroke="#1a50b8" stroke-width="1.1"/></svg>
<svg style="left:74px;top:597px;" width="15" height="16" viewBox="0 0 15 16"><path d="M3.5 0.5h8l3 3v11h-11z" fill="url(#gp)" stroke="#3b4a66"/><path d="M6.3 4.2a3 3 0 1 0 0 4.6" stroke="#fff" stroke-width="3" fill="none"/><path d="M6.3 4.2a3 3 0 1 0 0 4.6" stroke="#1a50b8" stroke-width="1.7" fill="none"/><path d="M7 6.5h3M8.5 5v3M10.5 6.5h3M12 5v3" stroke="#1a50b8" stroke-width="1.1"/></svg>
<div style="position:absolute;left:265px;top:367.5px;width:5.5px;height:37px;background:#ffe45c"></div>
<div style="position:absolute;left:265px;top:423px;width:5.5px;height:18.7px;background:#ffe45c"></div>
<div style="position:absolute;left:278px;top:147px;width:1px;height:483px;background:#a5a5a5"></div>
<svg style="left:273px;top:371px;" width="11" height="11" viewBox="0 0 11 11"><rect x="0.5" y="0.5" width="9" height="9" fill="#f4f4f4" stroke="#a5a5a5"/><path d="M2 5h6" stroke="#303030" stroke-width="1.5"/></svg>
<div style="position:absolute;left:279px;top:460px;width:4px;height:1px;background:#a5a5a5"></div>
<svg style="left:404px;top:384px;" width="482" height="56" viewBox="0 0 482 56"><rect x="1" y="1" width="480" height="54" fill="none" stroke="#ff0000" stroke-width="2" stroke-dasharray="2 2" shape-rendering="crispEdges"/></svg>
<div style="position:absolute;left:1181.5px;top:2.5px;width:30px;height:16px;box-sizing:border-box;border:1px solid #5a6a86;border-radius:3px;background:linear-gradient(#cddff2 0%,#bcd1ea 48%,#9fb9d8 52%,#b0c8e4 100%);box-shadow:inset 0 0 0 1px rgba(255,255,255,0.55)"></div>
<svg style="left:1181.5px;top:2.5px;" width="30" height="16" viewBox="0 0 30 16"><rect x="10" y="8" width="10" height="4.5" rx="1.5" fill="#f4f4f4" stroke="#3c3c4c" stroke-width="1"/></svg>
<div style="position:absolute;left:1214.5px;top:2.5px;width:30px;height:16px;box-sizing:border-box;border:1px solid #5a6a86;border-radius:3px;background:linear-gradient(#cddff2 0%,#bcd1ea 48%,#9fb9d8 52%,#b0c8e4 100%);box-shadow:inset 0 0 0 1px rgba(255,255,255,0.55)"></div>
<svg style="left:1214.5px;top:2.5px;" width="30" height="16" viewBox="0 0 30 16"><rect x="13.5" y="3.5" width="7" height="6" fill="#f4f4f4" stroke="#3c3c4c"/><rect x="9.5" y="6.5" width="7" height="7" fill="#f4f4f4" stroke="#3c3c4c"/><rect x="11.5" y="9.5" width="3" height="2" fill="#3c3c4c"/></svg>
<div style="position:absolute;left:1247.5px;top:2.5px;width:30px;height:16px;box-sizing:border-box;border:1px solid #5a1818;border-radius:3px;background:linear-gradient(#eeb0a0 0%,#e08870 48%,#c44426 52%,#d86a50 100%);box-shadow:inset 0 0 0 1px rgba(255,255,255,0.55)"></div>
<svg style="left:1247.5px;top:2.5px;" width="30" height="16" viewBox="0 0 30 16"><path d="M11 4.5l8 7.5M19 4.5l-8 7.5" stroke="#3c3c4c" stroke-width="4" stroke-linecap="round"/><path d="M11 4.5l8 7.5M19 4.5l-8 7.5" stroke="#ffffff" stroke-width="2.2" stroke-linecap="round"/></svg>
<svg style="left:0px;top:5px;" width="20" height="12" viewBox="0 0 20 12"><ellipse cx="6" cy="5.6" rx="3.3" ry="2.7" fill="none" stroke="#2a5ab8" stroke-width="2"/><ellipse cx="13.6" cy="5.4" rx="3.3" ry="2.9" fill="none" stroke="#7a30c0" stroke-width="2"/></svg>
<div style="position:absolute;left:382.5px;top:45.5px;width:89.0px;height:19px;box-sizing:border-box;border:1px solid #8c95a8;border-radius:1px;background:#ffffff"></div>
<div class="t" style="left:385.5px;top:49.84px;color:#000;font-size:12px;line-height:12px;font-family:'Liberation Sans';font-weight:400;transform:scaleX(0.9084);transform-origin:0 0;">Release</div>
<svg style="left:462.5px;top:54px;" width="6" height="4" viewBox="0 0 6 4"><path d="M0 0h6l-3 3.5z" fill="#1c1c1c"/></svg>
<div style="position:absolute;left:478.5px;top:45.5px;width:159.0px;height:19px;box-sizing:border-box;border:1px solid #8c95a8;border-radius:1px;background:#ffffff"></div>
<div class="t" style="left:481.5px;top:49.84px;color:#000;font-size:12px;line-height:12px;font-family:'Liberation Sans';font-weight:400;transform:scaleX(0.9040);transform-origin:0 0;">x64</div>
<svg style="left:628.5px;top:54px;" width="6" height="4" viewBox="0 0 6 4"><path d="M0 0h6l-3 3.5z" fill="#1c1c1c"/></svg>
<div style="position:absolute;left:673.5px;top:45.5px;width:184.0px;height:19px;box-sizing:border-box;border:1px solid #8c95a8;border-radius:1px;background:#ffffff"></div>
<div class="t" style="left:676.5px;top:49.84px;color:#000;font-size:12px;line-height:12px;font-family:'Liberation Sans';font-weight:400;transform:scaleX(1.0054);transform-origin:0 0;">myChargingStopped</div>
<svg style="left:848.5px;top:54px;" width="6" height="4" viewBox="0 0 6 4"><path d="M0 0h6l-3 3.5z" fill="#1c1c1c"/></svg>
<div style="position:absolute;left:148.5px;top:47px;width:1px;height:16px;background:#9aa6bb"></div>
<div style="position:absolute;left:221.5px;top:47px;width:1px;height:16px;background:#9aa6bb"></div>
<div style="position:absolute;left:354px;top:47px;width:1px;height:16px;background:#9aa6bb"></div>
<div style="position:absolute;left:644.4px;top:47px;width:1px;height:16px;background:#9aa6bb"></div>
<div style="position:absolute;left:864.4px;top:47px;width:1px;height:16px;background:#9aa6bb"></div>
<div style="position:absolute;left:126.5px;top:72px;width:1px;height:16px;background:#9aa6bb"></div>
<div style="position:absolute;left:177.5px;top:72px;width:1px;height:16px;background:#9aa6bb"></div>
<div style="position:absolute;left:228.5px;top:72px;width:1px;height:16px;background:#9aa6bb"></div>
<div style="position:absolute;left:6px;top:47px;width:2px;height:2px;background:#505a70"></div>
<div style="position:absolute;left:6px;top:50px;width:2px;height:2px;background:#505a70"></div>
<div style="position:absolute;left:6px;top:53px;width:2px;height:2px;background:#505a70"></div>
<div style="position:absolute;left:6px;top:56px;width:2px;height:2px;background:#505a70"></div>
<div style="position:absolute;left:6px;top:59px;width:2px;height:2px;background:#505a70"></div>
<div style="position:absolute;left:6px;top:72px;width:2px;height:2px;background:#505a70"></div>
<div style="position:absolute;left:6px;top:75px;width:2px;height:2px;background:#505a70"></div>
<div style="position:absolute;left:6px;top:78px;width:2px;height:2px;background:#505a70"></div>
<div style="position:absolute;left:6px;top:81px;width:2px;height:2px;background:#505a70"></div>
<div style="position:absolute;left:6px;top:84px;width:2px;height:2px;background:#505a70"></div>
<svg style="left:16px;top:47px;" width="16" height="16" viewBox="0 0 16 16"><rect x="4.5" y="1.5" width="11" height="12" fill="url(#gw)" stroke="#5a6c94"/><rect x="4" y="1" width="12" height="2.5" fill="#4a7ad8"/><path d="M3 0v7M0 3.5h7M1 1l4 5M5 1l-4 5" stroke="#f4c820" stroke-width="1.2"/><rect x="2.5" y="8.5" width="7" height="7" fill="#e8eef8" stroke="#4a5a80"/><path d="M4 10.5h4M4 12.5h4M4 14h4" stroke="#3a68c8"/></svg>
<svg style="left:37px;top:53px;" width="6" height="4" viewBox="0 0 6 4"><path d="M0 0h6l-3 3z" fill="#1c2438"/></svg>
<svg style="left:49px;top:47px;" width="16" height="16" viewBox="0 0 16 16"><rect x="1.5" y="3.5" width="14" height="11" fill="url(#gw)" stroke="#4a5a80"/><circle cx="8" cy="7" r="1" fill="#4848c8"/><circle cx="12" cy="7" r="1" fill="#f0a000"/><circle cx="4" cy="11" r="1" fill="#2080e0"/><circle cx="8" cy="11" r="1" fill="#e02020"/><circle cx="12" cy="11" r="1" fill="#20a020"/><path d="M3 0v7M0 3.5h7M1 1l4 5M5 1l-4 5" stroke="#f4c820" stroke-width="1.2"/></svg>
<svg style="left:70px;top:53px;" width="6" height="4" viewBox="0 0 6 4"><path d="M0 0h6l-3 3z" fill="#1c2438"/></svg>
<svg style="left:82px;top:47px;" width="16" height="16" viewBox="0 0 16 16"><path d="M0.5 3.5h5l1 1.5h6v9h-12.5z" fill="#f4dc90" stroke="#a88030"/><path d="M1 14.5l3-7h12l-3 7z" fill="url(#gf)" stroke="#8a6a20"/><path d="M10 3q3-3 5 1" stroke="#3a60b0" stroke-width="1.5" fill="none"/><path d="M14 2l2 3l-3 0z" fill="#3a60b0"/></svg>
<svg style="left:105px;top:48px;" width="16" height="16" viewBox="0 0 16 16"><rect x="0.5" y="0.5" width="13" height="13" rx="1" fill="#5454c0" stroke="#30308a"/><rect x="2.5" y="1" width="9" height="6" fill="#f4f4fa"/><rect x="4" y="9" width="6" height="4" fill="#2a2a4a"/><rect x="6" y="10" width="3" height="3" fill="#e0e0e0"/></svg>
<svg style="left:127px;top:47px;" width="16" height="16" viewBox="0 0 16 16"><rect x="4.5" y="0.5" width="10" height="10" fill="#5a5ac4" stroke="#30308a"/><rect x="2.5" y="2.5" width="10" height="10" fill="#5a5ac4" stroke="#30308a"/><rect x="0.5" y="4.5" width="10" height="10" fill="#5454c0" stroke="#30308a"/><rect x="2" y="5" width="7" height="4" fill="#f4f4fa"/><rect x="3" y="11" width="5" height="3" fill="#2a2a4a"/></svg>
<svg style="left:156px;top:48px;" width="16" height="16" viewBox="0 0 16 16"><path d="M4 0l3 8M10 0l-3 8" stroke="#8a8a8a" stroke-width="1.4"/><circle cx="4" cy="11" r="2.5" fill="none" stroke="#3a68c8" stroke-width="1.6"/><circle cx="10" cy="11" r="2.5" fill="none" stroke="#3a68c8" stroke-width="1.6"/></svg>
<svg style="left:177px;top:47px;" width="16" height="16" viewBox="0 0 16 16"><path d="M0.5 0.5h6l2 2v8h-8z" fill="#f4f8ff" stroke="#6a7a9a"/><path d="M6.5 4.5h6l3 3v8h-9z" fill="#f4f8ff" stroke="#3a5a9a"/><path d="M8 9h5M8 11h5M8 13h5" stroke="#3a68c8"/><path d="M2 3h3M2 5h4M2 7h4" stroke="#6a8ad0"/></svg>
<svg style="left:199px;top:47px;" width="16" height="16" viewBox="0 0 16 16"><rect x="0.5" y="2.5" width="11" height="13" rx="1" fill="#f0c030" stroke="#9a7010"/><rect x="3.5" y="0.5" width="5" height="3" fill="#d8d0b0" stroke="#706040"/><path d="M6.5 7.5h6l3 3v5h-9z" fill="#eef2fa" stroke="#404a5a"/><path d="M8 11h5M8 13h5" stroke="#6a7a9a"/></svg>
<svg style="left:229px;top:47px;" width="16" height="16" viewBox="0 0 16 16"><path d="M4 5q7-4 8 3q0 5-5 6" stroke="#3a6ad8" stroke-width="2.2" fill="none"/><path d="M0 3l6 0l-3 6z" fill="#3a6ad8"/></svg>
<svg style="left:251px;top:54px;" width="6" height="4" viewBox="0 0 6 4"><path d="M0 0h6l-3 3z" fill="#1c2438"/></svg>
<svg style="left:264px;top:47px;" width="16" height="16" viewBox="0 0 16 16"><path d="M9 5q-7-4-8 3q0 5 5 6" stroke="#a0a4ac" stroke-width="2.2" fill="none"/><path d="M12 3l-6 0l3 6z" fill="#a0a4ac"/></svg>
<svg style="left:286px;top:54px;" width="6" height="4" viewBox="0 0 6 4"><path d="M0 0h6l-3 3z" fill="#8a92a2"/></svg>
<svg style="left:298px;top:47px;" width="16" height="16" viewBox="0 0 16 16"><rect x="4.5" y="0.5" width="11" height="11" fill="#f8f8f0" stroke="#3a3a3a"/><path d="M6 3h7M6 6h4M10 6h3M6 9h7" stroke="#2030e0"/><path d="M0 11l4-3v2h6v3h-6v2z" fill="#3a70d8"/></svg>
<svg style="left:319px;top:54px;" width="6" height="4" viewBox="0 0 6 4"><path d="M0 0h6l-3 3z" fill="#1c2438"/></svg>
<svg style="left:331px;top:47px;" width="16" height="16" viewBox="0 0 16 16"><rect x="0.5" y="0.5" width="11" height="11" fill="#f0f0f0" stroke="#8a8a8a"/><path d="M2 3h7M2 6h7M2 9h5" stroke="#9a9a9a"/><path d="M16 11l-4-3v2h-6v3h6v2z" fill="#a0a4ac"/></svg>
<svg style="left:365px;top:49px;" width="16" height="16" viewBox="0 0 16 16"><path d="M0 0l7 5.5l-7 5.5z" fill="#20a020" stroke="#107010" stroke-width="0.6"/></svg>
<svg style="left:651px;top:47px;" width="16" height="16" viewBox="0 0 16 16"><path d="M0.5 4.5h5l1 1.5h6v8h-12.5z" fill="#f0c850" stroke="#9a7010"/><path d="M1 15l3-6h12l-3 6z" fill="#f4d060" stroke="#8a6a20"/><rect x="8" y="0" width="3" height="7" fill="#2a2a2a"/><rect x="12" y="0" width="3" height="7" fill="#2a2a2a"/></svg>
<svg style="left:38px;top:73px;" width="16" height="16" viewBox="0 0 16 16"><rect x="0.5" y="1" width="6" height="4" fill="#c8d8ee" stroke="#8a9ab8"/><rect x="2" y="6" width="4" height="4" fill="#606060"/><path d="M7 2v9l2-2l2 4l1-1l-2-4h3z" fill="#e8e8e8" stroke="#404040" stroke-width="0.8"/><rect x="7.5" y="11.5" width="8" height="4" fill="#f4e060" stroke="#3a4a6a"/></svg>
<svg style="left:61px;top:73px;" width="16" height="16" viewBox="0 0 16 16"><path d="M1 0v12l3-3l2.5 5l1.5-1l-2.5-5h4z" fill="#fff" stroke="#000" stroke-width="1"/><rect x="3.5" y="11.5" width="12" height="4" fill="#ffff20" stroke="#3a4a6a"/><path d="M5 13.5h4M11 13.5h3" stroke="#3060c0"/></svg>
<svg style="left:82px;top:73px;" width="16" height="16" viewBox="0 0 16 16"><path d="M0.5 12l4-10h1l4 10M2 8.5h6" stroke="#203080" stroke-width="1.6" fill="none"/><path d="M9 6h5M12 3.5l3 2.5l-3 2.5" stroke="#3a70d8" stroke-width="1.4" fill="none"/><path d="M9 12.5h1M11 12.5h1M13 12.5h1" stroke="#203080"/></svg>
<svg style="left:235px;top:73px;" width="16" height="16" viewBox="0 0 16 16"><rect x="0.5" y="0.5" width="15" height="11" rx="2" fill="url(#gw)" stroke="#4a70c8" stroke-width="1.2"/></svg>
<svg style="left:257px;top:73px;" width="16" height="16" viewBox="0 0 16 16"><rect x="2.5" y="0.5" width="13" height="9" rx="2" fill="#e8e8e8" stroke="#a0a0a0"/><path d="M0 11l4-3v2h5v3h-5v2z" fill="#a8a8a8"/></svg>
<svg style="left:279px;top:73px;" width="16" height="16" viewBox="0 0 16 16"><rect x="0.5" y="0.5" width="13" height="9" rx="2" fill="#e8e8e8" stroke="#a0a0a0"/><path d="M16 11l-4-3v2h-5v3h5v2z" fill="#a8a8a8"/></svg>
<svg style="left:302px;top:73px;" width="16" height="16" viewBox="0 0 16 16"><path d="M2.5 2.5h4l1 1h8v9h-13z" fill="#e0e0e0" stroke="#909090"/><path d="M0 11l4-3v2h5v3h-5v2z" fill="#a0a0a0"/></svg>
<svg style="left:323px;top:73px;" width="16" height="16" viewBox="0 0 16 16"><path d="M0.5 2.5h4l1 1h8v9h-13z" fill="#e0e0e0" stroke="#909090"/><path d="M16 11l-4-3v2h-5v3h5v2z" fill="#a0a0a0"/></svg>
<svg style="left:345px;top:73px;" width="16" height="16" viewBox="0 0 16 16"><path d="M5.5 0.5h6l2 2v7h-8z" fill="#f4f8ff" stroke="#4a5a80"/><path d="M7 3h4M7 5h4" stroke="#3a68c8"/><rect x="7.5" y="9.5" width="8" height="5" rx="1.5" fill="#f0f4ff" stroke="#3a68c8"/><path d="M0 9l4-4v2.5h4v3h-4v2.5z" fill="#3a70d8"/></svg>
<svg style="left:367px;top:73px;" width="16" height="16" viewBox="0 0 16 16"><path d="M2.5 0.5h6l2 2v7h-8z" fill="#f4f8ff" stroke="#4a5a80"/><path d="M4 3h4M4 5h4" stroke="#3a68c8"/><rect x="0.5" y="9.5" width="8" height="5" rx="1.5" fill="#f0f4ff" stroke="#3a68c8"/><path d="M16 9l-4-4v2.5h-4v3h4v2.5z" fill="#3a70d8"/></svg>
<svg style="left:389px;top:73px;" width="16" height="16" viewBox="0 0 16 16"><rect x="2.5" y="2.5" width="13" height="9" rx="2" fill="#e8e8e8" stroke="#a0a0a0"/><rect x="0.5" y="0.5" width="13" height="9" rx="2" fill="#e8e8e8" stroke="#a0a0a0"/><path d="M8 8l7 7M15 8l-7 7" stroke="#909090" stroke-width="1.4"/></svg>
<div style="position:absolute;left:410px;top:68px;width:10px;height:24px;background:#dde2ec;border-radius:0 3px 3px 0"></div>
<svg style="left:413px;top:82px;" width="7" height="6" viewBox="0 0 7 6"><path d="M0.5 0.5h6" stroke="#1c2438"/><path d="M0 2.5h7l-3.5 3z" fill="#1c2438"/></svg>
<div style="position:absolute;left:1058px;top:43px;width:10px;height:23px;background:#dde2ec;border-radius:0 3px 3px 0"></div>
<svg style="left:1059px;top:57px;" width="7" height="6" viewBox="0 0 7 6"><path d="M0.5 0.5h6" stroke="#1c2438"/><path d="M0 2.5h7l-3.5 3z" fill="#1c2438"/></svg>
<svg style="left:871px;top:47px;" width="16" height="16" viewBox="0 0 16 16"><rect x="4.5" y="0.5" width="11" height="12" fill="url(#gw)" stroke="#5a6c94"/><rect x="4" y="0" width="12" height="2" fill="#4a7ad8"/><path d="M0.5 5.5h4l1 1h4v4h-9.5z" fill="#f0c850" stroke="#9a7010"/><circle cx="8" cy="10" r="3" fill="#d8ecff" stroke="#3a5a9a" stroke-width="1.2"/><path d="M10 12l3 3" stroke="#c8a030" stroke-width="2"/></svg>
<svg style="left:893px;top:47px;" width="16" height="16" viewBox="0 0 16 16"><rect x="1.5" y="6.5" width="11" height="9" fill="#f4f6fa" stroke="#4a5a80"/><path d="M3 10h7M3 12h7" stroke="#6a8ad0"/><path d="M4 6l6-5h5v4h-5z" fill="#f0c030" stroke="#8a6a10" stroke-width="0.8"/><rect x="14" y="1" width="2" height="5" fill="#20a020"/></svg>
<svg style="left:915px;top:47px;" width="16" height="16" viewBox="0 0 16 16"><rect x="0.5" y="0.5" width="13" height="12" fill="url(#gw)" stroke="#5a6c94"/><rect x="0" y="0" width="14" height="2" fill="#4a7ad8"/><rect x="7" y="8" width="2.5" height="7" fill="#2060e0"/><rect x="10" y="6" width="2.5" height="9" fill="#e89020"/><rect x="13" y="8" width="2.5" height="7" fill="#20a040"/><path d="M11 9h5" stroke="#e02020"/></svg>
<svg style="left:937px;top:47px;" width="16" height="16" viewBox="0 0 16 16"><rect x="0.5" y="2.5" width="15" height="12" fill="url(#gw)" stroke="#5a6c94"/><rect x="0" y="2" width="16" height="2" fill="#4a7ad8"/><path d="M2 8h5M2 10h5" stroke="#6a8ad0"/><path d="M5 6l3-3l3 3l-3 3z" fill="#f0c030"/><path d="M9 11l3-3l3 3l-3 3z" fill="#e060d0"/><path d="M11 2l2-2l2 2l-2 2z" fill="#3a70d8"/></svg>
<svg style="left:959px;top:47px;" width="16" height="16" viewBox="0 0 16 16"><path d="M1 15l8-8" stroke="#e02020" stroke-width="2.2"/><path d="M3 1l9 9" stroke="#606870" stroke-width="1.8"/><path d="M9 3l4-2l3 3l-2 4" stroke="#707880" stroke-width="1.5" fill="none"/><path d="M10 10l4 4" stroke="#505860" stroke-width="2"/></svg>
<svg style="left:982px;top:47px;" width="16" height="16" viewBox="0 0 16 16"><rect x="0.5" y="0.5" width="15" height="14" fill="url(#gw)" stroke="#203a80"/><rect x="0" y="0" width="16" height="2" fill="#3a60d0"/><path d="M2 7h6v-4l6 5l-6 5v-4h-6z" fill="#20c020" stroke="#107010" stroke-width="0.7"/></svg>
<svg style="left:1003px;top:47px;" width="16" height="16" viewBox="0 0 16 16"><rect x="9.5" y="0.5" width="5" height="6" fill="#f0c030" stroke="#8a6a10"/><rect x="1.5" y="2.5" width="8" height="10" fill="#70a8e0" stroke="#203a80"/><rect x="3.5" y="6.5" width="6" height="6" fill="#40a040" stroke="#206020"/><rect x="9.5" y="9.5" width="5" height="5" fill="#f070e0" stroke="#802080"/><rect x="0" y="15" width="16" height="1.5" fill="#7a7a7a"/></svg>
<svg style="left:1025px;top:47px;" width="16" height="16" viewBox="0 0 16 16"><rect x="0.5" y="2.5" width="14" height="11" fill="url(#gw)" stroke="#3a4a70"/><rect x="0" y="2" width="15" height="2" fill="#4a7ad8"/><path d="M3 6.5l2 1.5l-2 1.5" stroke="#000" fill="none" stroke-width="1.2"/></svg>
<svg style="left:1046px;top:54px;" width="6" height="4" viewBox="0 0 6 4"><path d="M0 0h6l-3 3z" fill="#1c2438"/></svg>
<div style="position:absolute;left:6px;top:100px;width:192px;height:18.5px;background:linear-gradient(#53668b,#475a7e);border-radius:2px 2px 0 0"></div>
<div class="t" style="left:8px;top:104.34px;color:#ffffff;font-size:12px;line-height:12px;font-family:'Liberation Sans';font-weight:400;transform:scaleX(0.9722);transform-origin:0 0;">Explorador de soluciones</div>
<svg style="left:154px;top:107px;" width="9" height="5" viewBox="0 0 9 5"><path d="M0 0h8l-4 4.5z" fill="#d4d9e4"/></svg>
<svg style="left:169.5px;top:104px;" width="8" height="11" viewBox="0 0 8 11"><path d="M2 0.5h4v6h-4z" fill="none" stroke="#e0e4ee"/><path d="M4 0.8v5.5" stroke="#e0e4ee" stroke-width="1.6"/><path d="M0 6.5h8M4 6.5v4.5" stroke="#e0e4ee" stroke-width="1.2"/></svg>
<svg style="left:184px;top:105px;" width="10" height="8" viewBox="0 0 10 8"><path d="M0.5 0.5l9 7.5M9.5 0.5l-9 7.5" stroke="#e0e4ee" stroke-width="1.3"/></svg>
<div style="position:absolute;left:35.5px;top:123px;width:1px;height:18px;background:#8a96ab"></div>
<svg style="left:41px;top:124px;" width="16" height="16" viewBox="0 0 16 16"><path d="M0.5 0.5h6v10h-6z" fill="#fff" stroke="#b0b0b0" stroke-dasharray="1 1"/><path d="M7.5 2.5h5l2 2v8h-7z" fill="#f0d890" stroke="#222"/><path d="M2.5 6.5h5l2 2v7h-7z" fill="#e8eefa" stroke="#3a5a9a"/><path d="M4 10h4M4 12h4" stroke="#3a68c8"/></svg>
<div style="position:absolute;left:64.5px;top:123px;width:1px;height:18px;background:#8a96ab"></div>
<svg style="left:93px;top:124px;" width="16" height="16" viewBox="0 0 16 16"><rect x="4.5" y="0.5" width="6" height="4" rx="1" fill="#a8c8f0" stroke="#3a6ab8"/><rect x="0.5" y="8.5" width="6" height="4" rx="1" fill="#a8c8f0" stroke="#3a6ab8"/><path d="M7 4.5v3h-4v1" stroke="#3a5a9a" fill="none"/><circle cx="10" cy="10" r="3.3" fill="#e8f4ff" stroke="#6a7a8a" stroke-width="1.2"/><circle cx="14" cy="14" r="1.6" fill="#f0a030"/></svg>
<div style="position:absolute;left:181px;top:146px;width:16px;height:467px;background:linear-gradient(90deg,#e4e4e4,#eeeeee 15%,#efefef 50%,#ececec)"></div>
<svg style="left:186px;top:153px;" width="7" height="4" viewBox="0 0 7 4"><path d="M3.5 0l3.5 4h-7z" fill="#6a6a6a"/></svg>
<svg style="left:186px;top:602px;" width="7" height="4" viewBox="0 0 7 4"><path d="M0 0h7l-3.5 4z" fill="#6a6a6a"/></svg>
<div style="position:absolute;left:181.5px;top:275px;width:14.5px;height:123.5px;box-sizing:border-box;border:1px solid #9a9a9a;border-radius:2px;background:linear-gradient(90deg,#fbfbfb,#f0f0f0 45%,#d6d6d8 55%,#dcdcde);box-shadow:inset 0 0 0 1px #ffffff"></div>
<svg style="left:183.5px;top:332px;" width="10" height="8" viewBox="0 0 10 8"><path d="M1 0.5h7M1 2.5h7M1 4.5h7M1 6.5h7" stroke="#505050"/></svg>
<div style="position:absolute;left:6px;top:613px;width:175px;height:17px;background:linear-gradient(#e4e4e4,#eeeeee 15%,#efefef 50%,#ececec)"></div>
<div style="position:absolute;left:181px;top:613px;width:16px;height:17px;background:#ececec"></div>
<svg style="left:13px;top:618px;" width="4" height="7" viewBox="0 0 4 7"><path d="M0 3.5l4-3.5v7z" fill="#6a6a6a"/></svg>
<svg style="left:170px;top:618px;" width="4" height="7" viewBox="0 0 4 7"><path d="M4 3.5l-4-3.5v7z" fill="#6a6a6a"/></svg>
<div style="position:absolute;left:25.5px;top:614px;width:96px;height:14.5px;box-sizing:border-box;border:1px solid #9a9a9a;border-radius:2px;background:linear-gradient(#fbfbfb,#f0f0f0 45%,#d6d6d8 55%,#dcdcde);box-shadow:inset 0 0 0 1px #ffffff"></div>
<svg style="left:68px;top:617px;" width="8" height="9" viewBox="0 0 8 9"><path d="M0.5 1v7M2.5 1v7M4.5 1v7" stroke="#505050"/></svg>
<div style="position:absolute;left:197px;top:118px;width:1px;height:512px;background:#ffffff;opacity:0.6"></div>
<svg style="left:11px;top:633px;" width="16" height="16" viewBox="0 0 16 16"><rect x="4.5" y="0.5" width="11" height="12" fill="url(#gw)" stroke="#5a6c94"/><rect x="4" y="0" width="12" height="2" fill="#4a7ad8"/><path d="M0.5 5.5h4l1 1h4v4h-9.5z" fill="#f0c850" stroke="#9a7010"/><circle cx="8" cy="10" r="3" fill="#d8ecff" stroke="#3a5a9a" stroke-width="1.2"/><path d="M10 12l3 3" stroke="#c8a030" stroke-width="2"/></svg>
<svg style="left:59px;top:634px;" width="16" height="16" viewBox="0 0 16 16"><rect x="0.5" y="2.5" width="15" height="12" fill="url(#gw)" stroke="#5a6c94"/><rect x="0" y="2" width="16" height="2" fill="#4a7ad8"/><path d="M2 8h5M2 10h5" stroke="#6a8ad0"/><path d="M5 6l3-3l3 3l-3 3z" fill="#f0c030"/><path d="M9 11l3-3l3 3l-3 3z" fill="#e060d0"/><path d="M11 2l2-2l2 2l-2 2z" fill="#3a70d8"/></svg>
<svg style="left:155px;top:633px;" width="16" height="16" viewBox="0 0 16 16"><rect x="0.5" y="0.5" width="13" height="12" fill="url(#gw)" stroke="#5a6c94"/><rect x="0" y="0" width="14" height="2" fill="#4a7ad8"/><rect x="7" y="8" width="2.5" height="7" fill="#2060e0"/><rect x="10" y="6" width="2.5" height="9" fill="#e89020"/><rect x="13" y="8" width="2.5" height="7" fill="#20a040"/><path d="M11 9h5" stroke="#e02020"/></svg>
<svg style="left:340px;top:106px;" width="10" height="10" viewBox="0 0 10 10"><path d="M1 1l8 8M9 1l-8 8" stroke="#5e5846" stroke-width="1.5"/></svg>
<svg style="left:1239px;top:109px;" width="9" height="5" viewBox="0 0 9 5"><path d="M0 0h8l-4 4.5z" fill="#d4d9e4"/></svg>
<svg style="left:210.5px;top:131px;" width="13" height="9" viewBox="0 0 13 9"><path d="M0.5 8.5q3-5 8-4.5" stroke="#3a6ae0" stroke-width="2" fill="none"/><path d="M7.5 0.5l5 4l-5 4z" fill="#3a6ae0"/></svg>
<svg style="left:719.5px;top:135px;" width="6" height="4" viewBox="0 0 6 4"><path d="M0 0h6l-3 3.5z" fill="#1c1c1c"/></svg>
<svg style="left:1243px;top:135px;" width="6" height="4" viewBox="0 0 6 4"><path d="M0 0h6l-3 3.5z" fill="#1c1c1c"/></svg>
<div style="position:absolute;left:728px;top:125.4px;width:2px;height:20px;background:#c4cad6"></div>
<svg style="left:733px;top:128px;" width="16" height="14" viewBox="0 0 16 14"><path d="M0 4h5M1 6h4M0 8h5" stroke="#e0d070" stroke-width="1"/><path d="M9 1l5 2.5v6l-5 2.5l-5-2.5v-6z" fill="#c060d0" stroke="#8030a0" stroke-width="0.8"/><path d="M9 1l5 2.5l-5 2.5l-5-2.5z" fill="#e8a0f0"/></svg>
<div style="position:absolute;left:1236px;top:147px;width:17px;height:483px;background:linear-gradient(90deg,#e2e2e2,#ededed 20%,#efefef 60%,#ebebeb)"></div>
<div style="position:absolute;left:1236.5px;top:147.5px;width:16px;height:16px;background:linear-gradient(#e2e6ee,#cdd4e0);box-sizing:border-box;border:1px solid #b9c0cc"></div>
<svg style="left:1239px;top:149px;" width="11" height="13" viewBox="0 0 11 13"><path d="M0 5.2h11M0 7.8h11" stroke="#000" stroke-width="1.3"/><path d="M5.5 0l3.5 3.2h-7zM5.5 13l3.5-3.2h-7z" fill="#000"/><path d="M5.5 2.5v2.5M5.5 8v2.5" stroke="#000" stroke-width="1.4"/></svg>
<svg style="left:1241px;top:172px;" width="7" height="4" viewBox="0 0 7 4"><path d="M3.5 0l3.5 4h-7z" fill="#a8a8a8"/></svg>
<svg style="left:1241px;top:619px;" width="7" height="4" viewBox="0 0 7 4"><path d="M0 0h7l-3.5 4z" fill="#6a6a6a"/></svg>
<div style="position:absolute;left:1237.3px;top:272px;width:14.2px;height:15px;box-sizing:border-box;border:1px solid #9a9a9a;border-radius:2px;background:linear-gradient(90deg,#fbfbfb,#f0f0f0 45%,#d6d6d8 55%,#dcdcde);box-shadow:inset 0 0 0 1px #ffffff"></div>
<div style="position:absolute;left:263px;top:630px;width:973px;height:17px;background:linear-gradient(#e2e2e2,#ededed 20%,#efefef 60%,#ebebeb)"></div>
<div style="position:absolute;left:1236px;top:630px;width:17px;height:17px;background:#ececec"></div>
<svg style="left:270px;top:634px;" width="4" height="7" viewBox="0 0 4 7"><path d="M0 3.5l4-3.5v7z" fill="#a8a8a8"/></svg>
<svg style="left:1224px;top:634px;" width="4" height="7" viewBox="0 0 4 7"><path d="M4 3.5l-4-3.5v7z" fill="#6a6a6a"/></svg>
<div style="position:absolute;left:281.5px;top:631px;width:764.5px;height:14.5px;box-sizing:border-box;border:1px solid #9a9a9a;border-radius:2px;background:linear-gradient(#fbfbfb,#f0f0f0 45%,#d6d6d8 55%,#dcdcde);box-shadow:inset 0 0 0 1px #ffffff"></div>
<svg style="left:659px;top:634px;" width="8" height="9" viewBox="0 0 8 9"><path d="M0.5 1v7M2.5 1v7M4.5 1v7" stroke="#505050"/></svg>
<svg style="left:252.5px;top:636px;" width="7" height="4" viewBox="0 0 7 4"><path d="M0 0h6l-3 3.5z" fill="#1c1c1c"/></svg>
<svg style="left:1262px;top:103px;" width="16" height="16" viewBox="0 0 16 16"><path d="M1 1l9 9" stroke="#e02020" stroke-width="1.8"/><path d="M14 1l-11 11" stroke="#e8eef8" stroke-width="1.8"/><path d="M9 2l3-2l3 3l-2 3" stroke="#e8eef8" stroke-width="1.4" fill="none"/><path d="M10 11l4 4" stroke="#c8d0e0" stroke-width="2"/></svg>
<div class="t" style="left:1262.5px;top:123px;color:#fff;font-size:12px;line-height:12px;font-family:'Liberation Sans';writing-mode:vertical-rl;transform:scaleY(0.978);transform-origin:0 0">Cuadro de herramientas</div>
<svg style="left:107px;top:633px;" width="16" height="16" viewBox="0 0 16 16"><rect x="0.5" y="0.5" width="12" height="10" fill="url(#gw)" stroke="#8a9ab8"/><rect x="0" y="0" width="13" height="2" fill="#5a8ae0"/><rect x="2.5" y="3.5" width="12" height="10" fill="url(#gw)" stroke="#8a9ab8"/><rect x="5.5" y="8.5" width="10" height="7" fill="#f4f6fa" stroke="#4a5a7a"/><path d="M7 10.5h1M7 12.5h1M9 10.5h5M9 12.5h5" stroke="#4a5a7a"/></svg>
<svg style="left:13px;top:124px;" width="16" height="16" viewBox="0 0 16 16"><path d="M0.5 1.5h5l1 1h6v9h-12z" fill="#f6e6b0" stroke="#b0a070"/><rect x="1.5" y="4.5" width="10" height="6" fill="#ffffff" stroke="none"/><path d="M2 5.5h1M2 7.5h1M2 9.5h1M4 5.5h7M4 7.5h7" stroke="#5a7ab0"/><rect x="4.5" y="9.5" width="11" height="6" fill="#f4f6fa" stroke="#3a4a6a"/><path d="M6 11.5h1M6 13.5h1M8 11.5h6M8 13.5h6" stroke="#3a4a6a"/></svg>
<svg style="left:72px;top:126px;" width="16" height="16" viewBox="0 0 16 16"><rect x="0.5" y="0.5" width="13" height="12" fill="#ffffff" stroke="#3a3a30"/><rect x="1" y="1" width="2" height="11" fill="#d8d4c0"/><path d="M4 3.5h3M6 5.5h3M4 9.5h4" stroke="#1030e0" stroke-width="1.2"/><path d="M8 3.5h4M10 5.5h2M5 7.5h6" stroke="#909090"/></svg>
<svg style="left:16px;top:73px;" width="16" height="16" viewBox="0 0 16 16"><rect x="0.5" y="0.5" width="12" height="12" fill="url(#gw)" stroke="#5a6c94"/><rect x="0" y="0" width="13" height="2" fill="#4a7ad8"/><path d="M2 4.5h6M2 6.5h6M2 8.5h6" stroke="#8aa0c8"/><path d="M5.5 5.5h6l2 2v7h-8z" fill="#f4f8ff" stroke="#5a6c94"/><path d="M7 9.5h4M7 11.5h4" stroke="#8aa0c8"/><path d="M14 8v6M12 12l2 3l2-3" stroke="#3a6ad8" stroke-width="1.4" fill="none"/></svg>
<svg style="left:104px;top:73px;" width="16" height="16" viewBox="0 0 16 16"><path d="M0.5 3v7.5M0.5 3.5h3" stroke="#b0b0b0" fill="none"/><rect x="5.5" y="0.5" width="10" height="15" fill="#fafafa" stroke="#b8b8b8"/><path d="M7 3.5h5M7 6.5h7M7 8.5h7M7 10.5h7M7 12.5h7" stroke="#5a5a5a"/></svg>
<svg style="left:133px;top:73px;" width="16" height="16" viewBox="0 0 16 16"><path d="M2 2.5h12M2 10.5h12M2 12.5h5" stroke="#000" stroke-width="1.2"/><path d="M7 4.5h8M7 7.5h6" stroke="#000" stroke-width="2"/><path d="M6.5 0v15" stroke="#000" stroke-width="1" stroke-dasharray="1 1"/><path d="M0 6.5l3.5-3v2h3v2h-3v2z" fill="#3a70d8"/></svg>
<svg style="left:155px;top:73px;" width="16" height="16" viewBox="0 0 16 16"><path d="M2 2.5h12M2 10.5h12M2 12.5h5" stroke="#000" stroke-width="1.2"/><path d="M7 4.5h8M7 7.5h6" stroke="#000" stroke-width="2"/><path d="M6.5 0v15" stroke="#000" stroke-width="1" stroke-dasharray="1 1"/><path d="M7 6.5l-3.5-3v2h-3v2h3v2z" fill="#3a70d8"/></svg>
<svg style="left:185px;top:73px;" width="16" height="16" viewBox="0 0 16 16"><path d="M1 1.5h2M4 1.5h11M4 10.5h11M2 13.5h13" stroke="#000" stroke-width="1.3"/><path d="M5 4.5h9M5 7.5h9" stroke="#20e8f0" stroke-width="1.2"/></svg>
<svg style="left:207px;top:73px;" width="16" height="16" viewBox="0 0 16 16"><path d="M4 10.5h11M2 13.5h13" stroke="#000" stroke-width="1.3"/><path d="M4 7.5h11" stroke="#20e8f0" stroke-width="1.2"/><path d="M4 4q3-4 7-1q1 3-3 4" stroke="#1030a0" stroke-width="1.5" fill="none"/><path d="M0.5 2l4.5 0l-1.5 4.5z" fill="#1030a0"/></svg>
</body></html>
